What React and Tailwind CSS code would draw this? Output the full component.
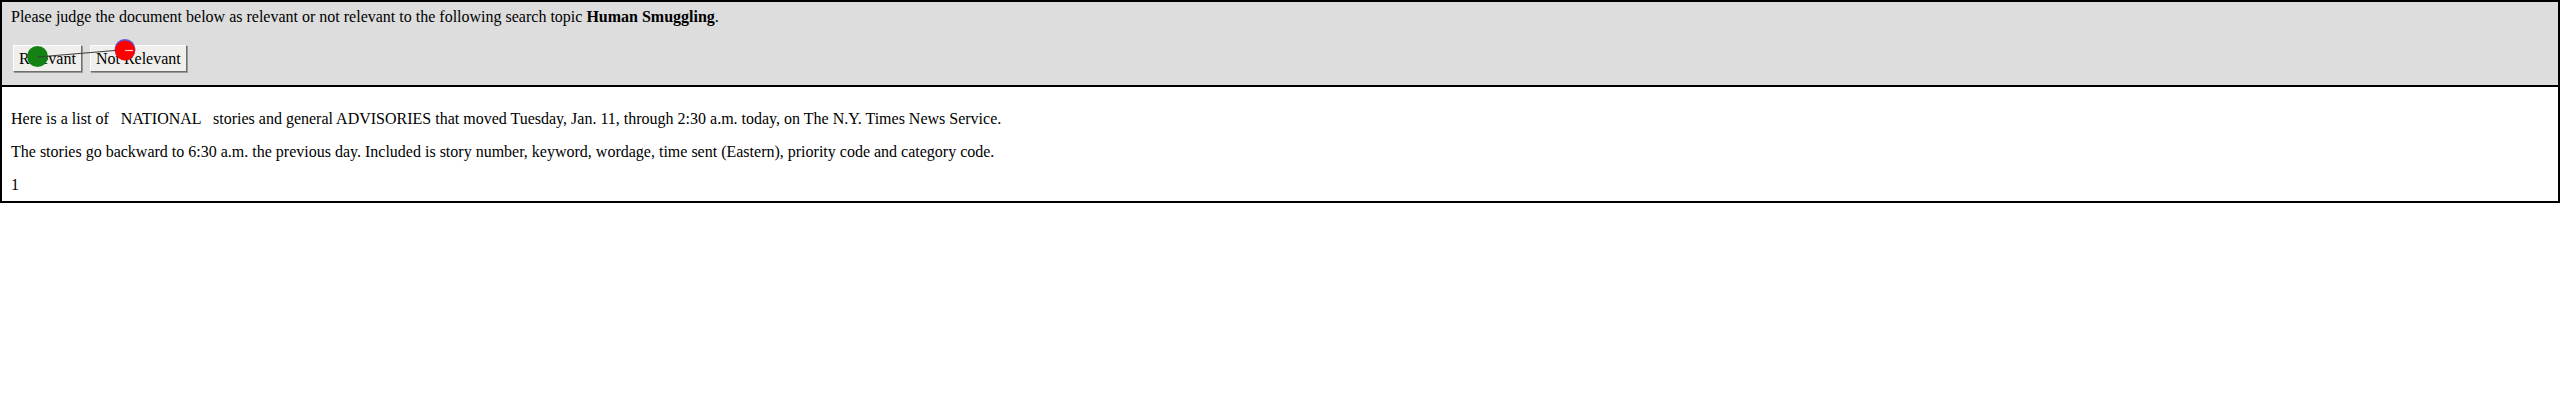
import React from 'react';

const Judge = () => {
  return (
    <div className="font-['Liberation_Serif',serif] text-[16px] text-black">
      {/* --- TOPIC HEADER --- */}
      <div className="relative bg-[#dddddd] border-2 border-black px-[9px] pt-[6px] pb-[13px]">
        <p className="leading-[18px]">
          Please judge the document below as relevant or not relevant to the following search topic <b>Human Smuggling</b>.
        </p>
        <div className="flex gap-[8px] mt-[19px] pl-[2px]">
          <button className="h-[27px] px-[5px] bg-[#f0efeb] border border-t-white border-l-white border-r-[#6f6f6f] border-b-[#6f6f6f] shadow-[1px_1px_0_#9a9a9a] leading-none">
            Relevant
          </button>
          <button className="h-[27px] px-[5px] bg-[#f0efeb] border border-t-white border-l-white border-r-[#6f6f6f] border-b-[#6f6f6f] shadow-[1px_1px_0_#9a9a9a] leading-none">
            Not Relevant
          </button>
        </div>

        {/* pointer markers drawn over the buttons */}
        <svg className="absolute left-0 top-0 pointer-events-none" width="200" height="80" viewBox="0 0 200 80">
          <circle cx="123" cy="47.5" r="10.5" fill="#5a5adf" />
          <circle cx="35.5" cy="54.5" r="10.5" fill="#138213" />
          <circle cx="123" cy="48.5" r="10" fill="#ff0000" />
          <line x1="35.5" y1="55" x2="113" y2="48.5" stroke="#3d3d3d" strokeWidth="1.2" />
          <line x1="123" y1="48.5" x2="131" y2="48.5" stroke="#ffd0d0" strokeWidth="1.2" />
        </svg>
      </div>

      {/* --- DOCUMENT BODY --- */}
      <div className="border-2 border-t-0 border-black px-[9px] pt-[8px]">
        <p className="whitespace-pre leading-[18px] my-[15px]">
          {"Here is a list of   NATIONAL   stories and general ADVISORIES that moved Tuesday, Jan. 11, through 2:30 a.m. today, on The N.Y. Times News Service."}
        </p>
        <p className="leading-[18px] my-[15px]">
          The stories go backward to 6:30 a.m. the previous day. Included is story number, keyword, wordage, time sent (Eastern), priority code and category code.
        </p>
        <p className="leading-[18px] mt-[15px] mb-[7px]">1</p>
      </div>
    </div>
  );
};

export default Judge;
